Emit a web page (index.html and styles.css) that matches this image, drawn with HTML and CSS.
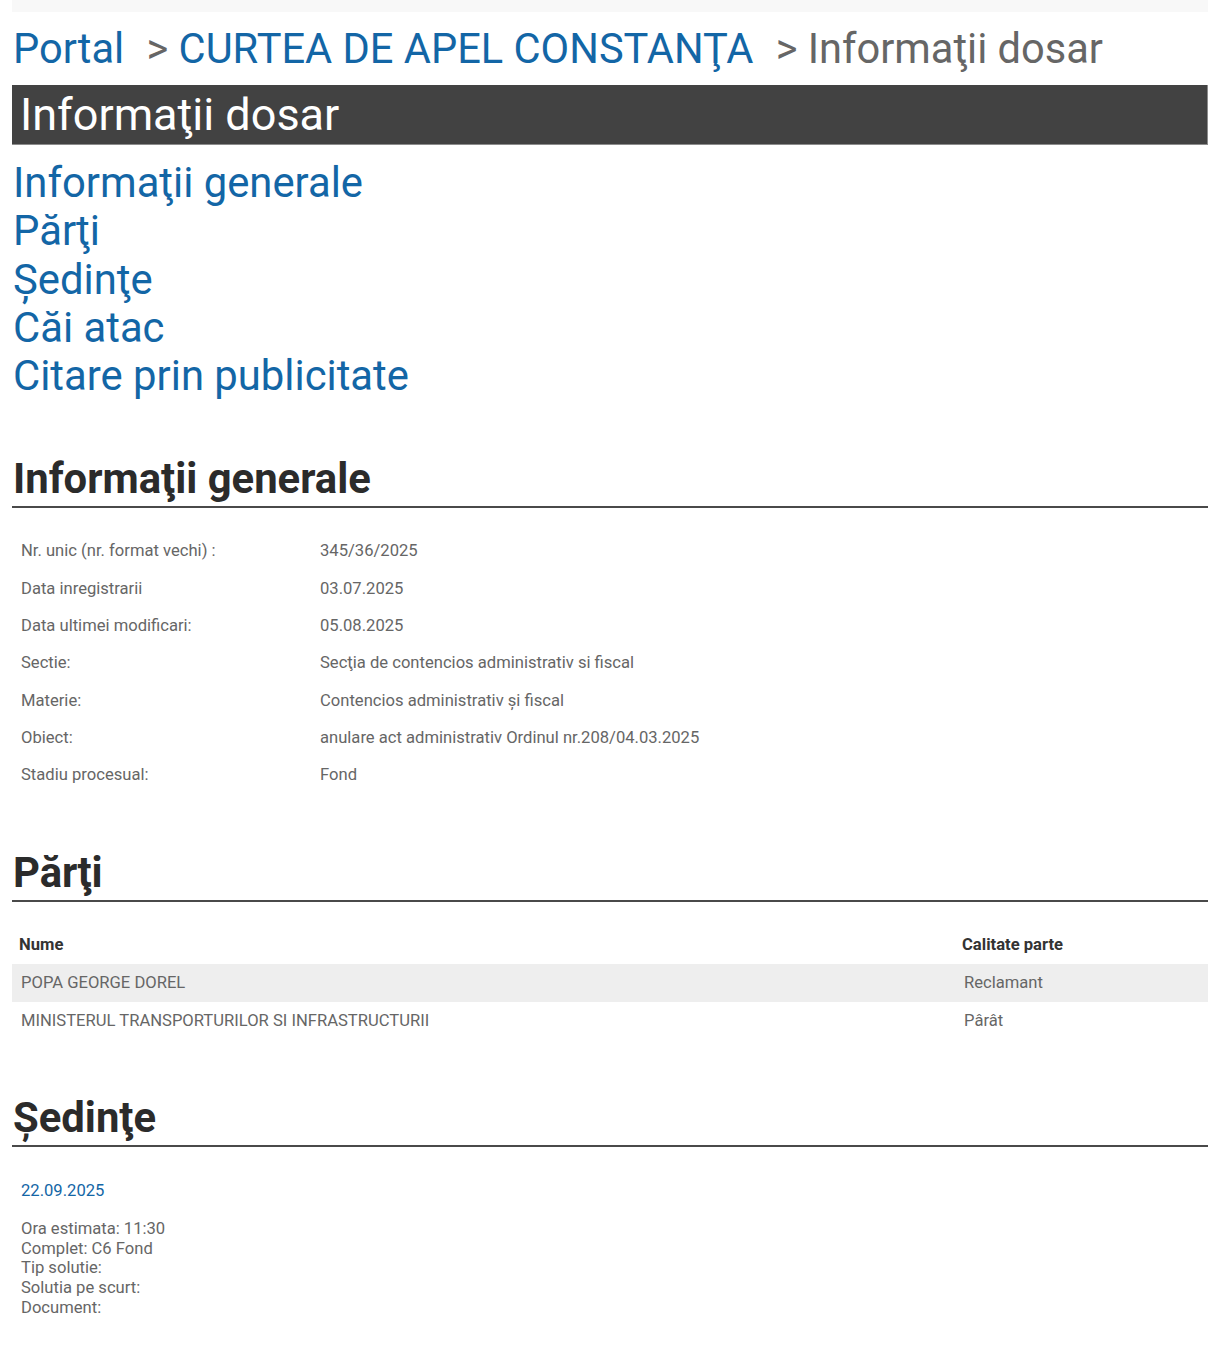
FILE: index.html
```html
<!DOCTYPE html>
<html lang="ro">
<head>
<meta charset="utf-8">
<title>Informaţii dosar</title>
<link rel="stylesheet" href="styles.css">
</head>
<body>
<div class="page">
  <div class="topbar"></div>
  <div class="breadcrumb">
    <a class="crumb" href="#">Portal</a>
    <span class="sep">&gt;</span>
    <a class="crumb" href="#">CURTEA DE APEL CONSTANŢA</a>
    <span class="sep">&gt;</span>
    <span class="current">Informaţii dosar</span>
  </div>
  <div class="titlebar">Informaţii dosar</div>
  <nav class="toc">
    <a href="#gen">Informaţii generale</a>
    <a href="#parti">Părţi</a>
    <a href="#sedinte">Şedinţe</a>
    <a href="#cai">Căi atac</a>
    <a href="#citare">Citare prin publicitate</a>
  </nav>

  <section class="section" id="gen">
    <h2 class="heading">Informaţii generale</h2>
    <table class="info">
      <tr><td class="label">Nr. unic (nr. format vechi) :</td><td>345/36/2025</td></tr>
      <tr><td class="label">Data inregistrarii</td><td>03.07.2025</td></tr>
      <tr><td class="label">Data ultimei modificari:</td><td>05.08.2025</td></tr>
      <tr><td class="label">Sectie:</td><td>Secţia de contencios administrativ si fiscal</td></tr>
      <tr><td class="label">Materie:</td><td>Contencios administrativ și fiscal</td></tr>
      <tr><td class="label">Obiect:</td><td>anulare act administrativ Ordinul nr.208/04.03.2025</td></tr>
      <tr><td class="label">Stadiu procesual:</td><td>Fond</td></tr>
    </table>
  </section>

  <section class="section" id="parti">
    <h2 class="heading">Părţi</h2>
    <table class="parties">
      <thead>
        <tr><th class="name">Nume</th><th>Calitate parte</th></tr>
      </thead>
      <tbody>
        <tr class="alt"><td>POPA GEORGE DOREL</td><td>Reclamant</td></tr>
        <tr><td>MINISTERUL TRANSPORTURILOR SI INFRASTRUCTURII</td><td>Pârât</td></tr>
      </tbody>
    </table>
  </section>

  <section class="section section-last" id="sedinte">
    <h2 class="heading">Şedinţe</h2>
    <div class="hearing">
      <div class="date">22.09.2025</div>
      <div class="details">
        <div>Ora estimata: 11:30</div>
        <div>Complet: C6 Fond</div>
        <div>Tip solutie:</div>
        <div>Solutia pe scurt:</div>
        <div>Document:</div>
      </div>
    </div>
  </section>
</div>
</body>
</html>
```

FILE: styles.css
```css
html, body {
  margin: 0;
  padding: 0;
  background: #ffffff;
}

body {
  font-family: Roboto, "Noto Sans", "Liberation Sans", sans-serif;
  color: #666666;
}

.page {
  padding: 0 12px;
}

.topbar {
  height: 12px;
  background: #f8f8f8;
}

.breadcrumb {
  font-size: 41.6px;
  line-height: 73px;
  height: 73px;
  white-space: nowrap;
  padding-left: 1px;
}

.crumb {
  color: #1366a6;
  text-decoration: none;
}

.sep {
  color: #666666;
  margin: 0 0 0 12px;
}

.current {
  color: #666666;
}

.titlebar {
  background: #424242;
  color: #ffffff;
  font-size: 45px;
  line-height: 59px;
  height: 59px;
  padding-left: 8px;
  border-bottom: 1px solid #8c8c8c;
  border-right: 1px solid #8c8c8c;
}

.toc {
  display: flex;
  flex-direction: column;
  align-items: flex-start;
  padding-top: 14px;
  padding-left: 1px;
}

.toc a {
  color: #1366a6;
  font-size: 41.8px;
  line-height: 48.3px;
  text-decoration: none;
}

.section {
  margin-top: 54px;
}

.section-last {
  margin-top: 54px;
}

.heading {
  margin: 0;
  font-size: 41.8px;
  font-weight: 700;
  line-height: 50px;
  color: #2b2b2b;
  padding-bottom: 2px;
  border-bottom: 2px solid #4a4a4a;
  padding-left: 1px;
}

.info, .parties {
  width: 100%;
  border-collapse: collapse;
  margin-top: 24px;
  font-size: 16.6px;
}

.info td {
  padding: 9px 9px;
  line-height: 19.33px;
  vertical-align: middle;
  color: #666666;
}

.info td.label {
  width: 281px;
}

.parties th {
  text-align: left;
  font-weight: 700;
  color: #333333;
  padding: 9px 7px;
  line-height: 20.5px;
}

.parties th.name {
  width: 929px;
}

.parties td {
  padding: 9px 9px;
  line-height: 19.33px;
  color: #666666;
}

.parties tr.alt td {
  background: #eeeeee;
}

.hearing {
  padding: 34px 9px 0;
  font-size: 16.6px;
}

.date {
  color: #1366a6;
  line-height: 20px;
}

.details {
  margin-top: 18px;
  line-height: 19.75px;
  color: #666666;
}
```
